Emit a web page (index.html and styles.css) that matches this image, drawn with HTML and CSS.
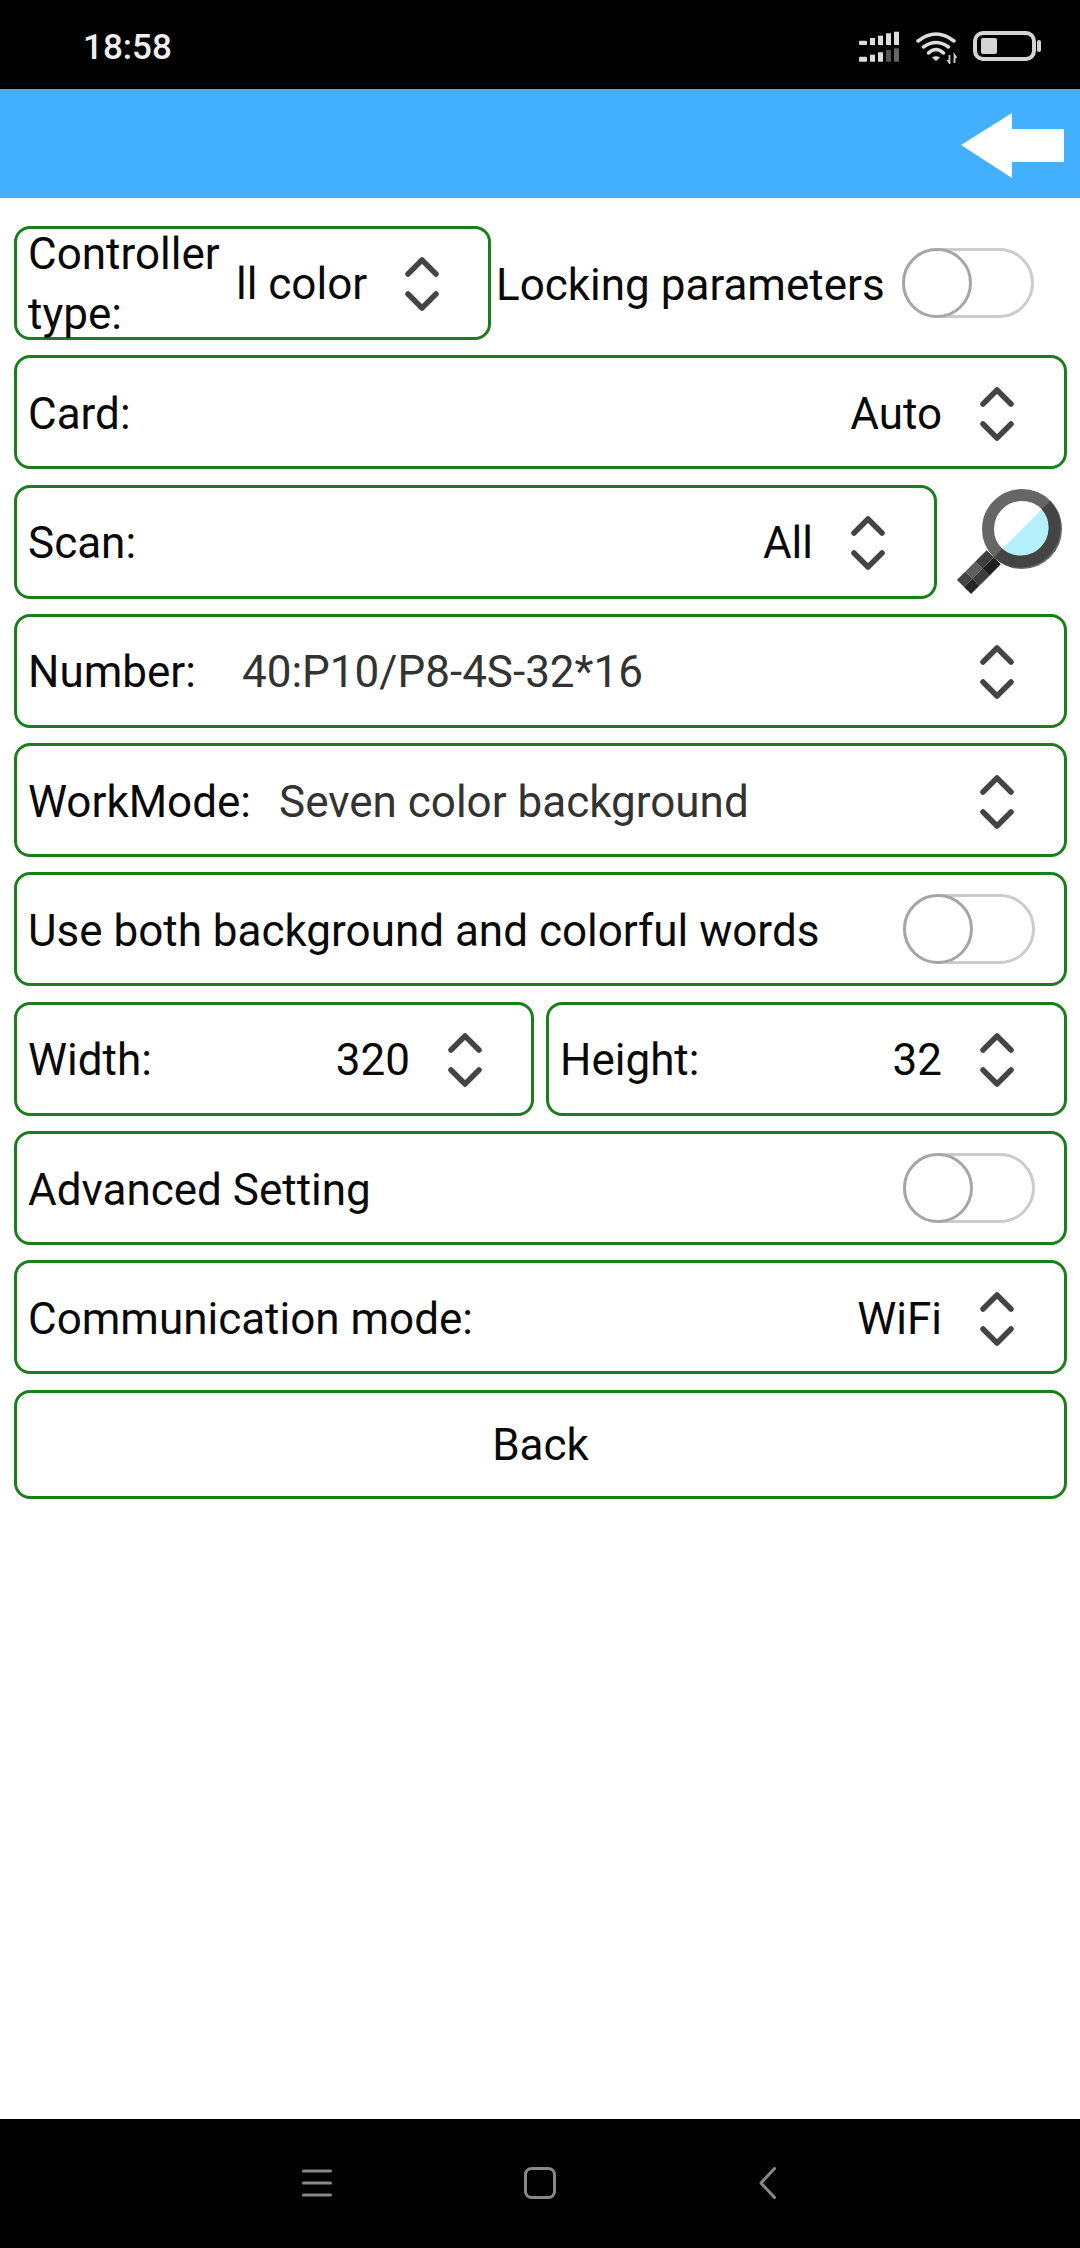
FILE: index.html
```html
<!DOCTYPE html>
<html lang="en">
<head>
<meta charset="utf-8">
<title>Controller settings</title>
<link rel="stylesheet" href="styles.css">
</head>
<body>
<svg class="defs" width="0" height="0" aria-hidden="true">
  <symbol id="chev" viewBox="0 0 34 54">
    <path d="M3 17 17 3 31 17M3 37 17 51 31 37" fill="none" stroke="#444" stroke-width="5.500" stroke-linecap="round" stroke-linejoin="round"/>
  </symbol>
</svg>
<div class="screen">
  <div class="statusbar">
    <span class="time">18:58</span>
    <svg class="status-icons" width="182" height="34" viewBox="0 0 182 34">
      <g fill="#ddd">
        <rect x="0" y="10.700" width="8" height="4.300" rx="1"/><rect x="11" y="8" width="5" height="7"/><rect x="19" y="5.700" width="5" height="9.300"/><rect x="27" y="3.300" width="5" height="11.700"/><rect x="35" y="1.700" width="5" height="13.300"/>
        <rect x="0" y="26.700" width="8" height="5" rx="1"/><rect x="11" y="24.700" width="5" height="7"/><rect x="19" y="22.300" width="5" height="9.400"/>
        <rect x="27" y="20" width="5" height="11.700" fill="#555"/><rect x="35" y="18.300" width="5" height="13.400" fill="#666"/>
      </g>
      <g fill="none" stroke="#ddd" stroke-width="3.500" stroke-linecap="round">
        <path d="M59 11Q77-3 95 11"/><path d="M64.500 17Q77 8 89.500 17"/><path d="M69.500 23Q77 16 84.500 23"/>
      </g>
      <path d="M73 27.500 77 31 81 27.500Q77 25 73 27.500Z" fill="#ddd"/>
      <path d="M90.500 25V33L88.500 30M95.500 33V25L97.500 28" fill="none" stroke="#ccc" stroke-width="1.800"/>
      <rect x="116" y="3" width="59" height="26" rx="8" fill="none" stroke="#d4d4d4" stroke-width="4"/>
      <rect x="122" y="8" width="16" height="16" rx="2" fill="#d4d4d4"/>
      <rect x="178" y="10" width="4" height="12" rx="2" fill="#d4d4d4"/>
    </svg>
  </div>
  <header class="appbar">
    <svg class="back-arrow" width="103" height="65" viewBox="0 0 103 65"><path d="M0 32 51 0V16H103V49H51V65Z" fill="#fff"/></svg>
  </header>
  <main class="form">
    <div class="split">
      <div class="box box-controller">
        <span class="label label-wrap">Controller type:</span>
        <span class="value">ll color</span>
        <svg class="chev"><use href="#chev"/></svg>
      </div>
      <div class="lock">
        <span class="label label-lock">Locking parameters</span>
        <span class="switch"></span>
      </div>
    </div>
    <div class="box">
      <span class="label grow">Card:</span>
      <span class="value">Auto</span>
      <svg class="chev"><use href="#chev"/></svg>
    </div>
    <div class="split">
      <div class="box box-tight grow">
        <span class="label grow">Scan:</span>
        <span class="value">All</span>
        <svg class="chev"><use href="#chev"/></svg>
      </div>
      <svg class="magnifier" width="106" height="106" viewBox="0 0 106 106">
        <g transform="translate(7 98) rotate(-45)">
          <rect x="0" y="-10" width="12" height="10" fill="#444"/>
          <rect x="0" y="0" width="12" height="10" fill="#262626"/>
          <rect x="12" y="-10" width="14" height="10" fill="#5e5e5e"/>
          <rect x="12" y="0" width="14" height="10" fill="#3c3c3c"/>
          <rect x="26" y="-10" width="16" height="10" fill="#3e3e3e"/>
          <rect x="26" y="0" width="16" height="10" fill="#1f1f1f"/>
        </g>
        <circle cx="65" cy="40" r="34" fill="#fff"/>
        <path d="M89 16A34 34 0 0 1 41 64Z" fill="#b3f0fb"/>
        <circle cx="65" cy="40" r="34" fill="none" stroke="#666" stroke-width="12"/>
        <path d="M89 16A34 34 0 0 1 41 64" fill="none" stroke="#444" stroke-width="12"/>
      </svg>
    </div>
    <div class="box">
      <span class="label label-number">Number:</span>
      <span class="value value-dim grow">40:P10/P8-4S-32*16</span>
      <svg class="chev"><use href="#chev"/></svg>
    </div>
    <div class="box">
      <span class="label label-mode">WorkMode:</span>
      <span class="value value-dim grow">Seven color background</span>
      <svg class="chev"><use href="#chev"/></svg>
    </div>
    <div class="box box-switch">
      <span class="label grow">Use both background and colorful words</span>
      <span class="switch"></span>
    </div>
    <div class="pair">
      <div class="box box-tight box-width">
        <span class="label grow">Width:</span>
        <span class="value">320</span>
        <svg class="chev"><use href="#chev"/></svg>
      </div>
      <div class="box grow">
        <span class="label grow">Height:</span>
        <span class="value">32</span>
        <svg class="chev"><use href="#chev"/></svg>
      </div>
    </div>
    <div class="box box-switch">
      <span class="label grow">Advanced Setting</span>
      <span class="switch"></span>
    </div>
    <div class="box">
      <span class="label grow">Communication mode:</span>
      <span class="value">WiFi</span>
      <svg class="chev"><use href="#chev"/></svg>
    </div>
    <button class="back-btn" type="button">Back</button>
  </main>
  <nav class="navbar">
    <svg width="30" height="32" viewBox="0 0 30 32"><path d="M1.500 4H28.500M1.500 16H28.500M1.500 28H28.500" stroke="#888" stroke-width="3" stroke-linecap="round"/></svg>
    <svg width="32" height="32" viewBox="0 0 32 32"><rect x="1.500" y="1.500" width="29" height="29" rx="6" fill="none" stroke="#888" stroke-width="3"/></svg>
    <svg width="17" height="32" viewBox="0 0 17 32"><path d="M15.500 1.500 2 16 15.500 30.500" fill="none" stroke="#888" stroke-width="3" stroke-linecap="round" stroke-linejoin="round"/></svg>
  </nav>
</div>
</body>
</html>
```
FILE: styles.css
```css
*, *::before { box-sizing: border-box; }
html, body { margin: 0; padding: 0; background: #fff; }
.defs { position: absolute; }
.screen {
  width: 1080px;
  height: 2248px;
  display: flex;
  flex-direction: column;
  font-family: Roboto, "Liberation Sans", sans-serif;
  font-size: 44px;
  color: #0a0a0a;
  overflow: hidden;
}
.statusbar {
  height: 89px;
  flex: none;
  background: #000;
  display: flex;
  align-items: center;
  justify-content: space-between;
  padding: 5px 39px 0 83px;
}
.time { font-size: 35px; font-weight: 500; color: #eee; }
.appbar {
  height: 109px;
  flex: none;
  background: #42b0ff;
  display: flex;
  align-items: center;
  justify-content: flex-end;
  padding: 4px 16px 0 0;
}
.form {
  flex: 1;
  display: flex;
  flex-direction: column;
  gap: 15.3px;
  padding: 28px 13px 0 14px;
}
.box {
  height: 114px;
  flex: none;
  display: flex;
  align-items: center;
  border: 3px solid #1b7d1b;
  border-radius: 16px;
  padding: 3px 50px 0 11px;
}
.box-tight { padding-right: 49px; }
.grow { flex: 1; min-width: 0; }
.label { white-space: nowrap; }
.value { white-space: nowrap; }
.label-wrap { white-space: normal; width: 200px; line-height: 60px; flex: none; }
.label-number { width: 214px; flex: none; }
.label-mode { width: 251px; flex: none; }
.label-lock { padding-top: 3px; }
.value-dim { color: #333; }
.chev { width: 34px; height: 54px; flex: none; margin-left: 38px; }
.split { display: flex; align-items: center; flex: none; }
.box-controller { width: 477px; padding-top: 1px; padding-right: 49px; justify-content: space-between; }
.box-controller .label-wrap { margin-right: 8px; }
.lock { flex: 1; display: flex; align-items: center; padding-left: 5px; padding-right: 33px; justify-content: space-between; }
.switch {
  position: relative;
  width: 132px;
  height: 70px;
  flex: none;
  display: block;
  border: 3px solid #ccc;
  border-radius: 35px;
  background: #fff;
}
.box-switch .switch { margin-top: -3px; }
.switch::before {
  content: "";
  position: absolute;
  left: -3px;
  top: -3px;
  width: 70px;
  height: 70px;
  border: 3px solid #a6a6a6;
  border-radius: 50%;
  background: #fff;
}
.box-switch { padding-right: 29px; }
.magnifier { flex: none; margin-left: 20px; margin-right: 4px; }
.pair { display: flex; gap: 12px; flex: none; }
.box-width { width: 520px; }
.back-btn {
  height: 109px;
  flex: none;
  font: inherit;
  color: inherit;
  background: #fff;
  border: 3px solid #1b7d1b;
  border-radius: 16px;
  padding: 2px 0 0;
}
.navbar {
  height: 129px;
  flex: none;
  background: #000;
  display: flex;
  align-items: center;
  padding: 0 0 2px 302px;
  gap: 192px;
}
.navbar svg:last-child { margin-left: 11px; }
```
